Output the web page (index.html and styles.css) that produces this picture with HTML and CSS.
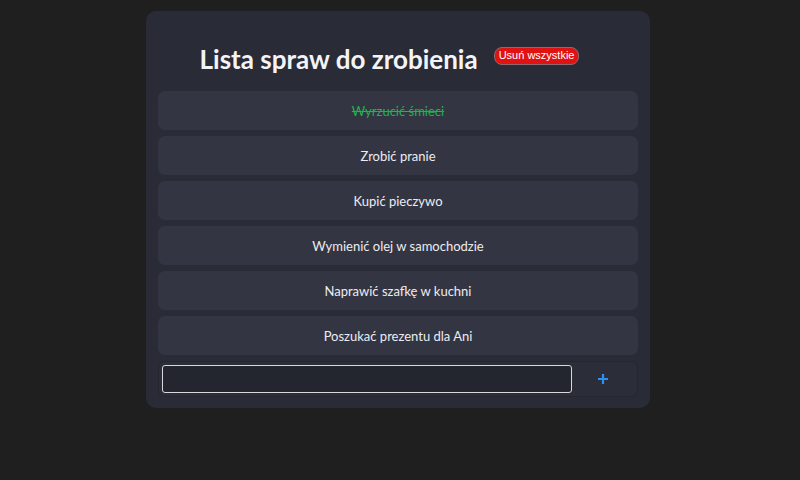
FILE: index.html
```html
<!DOCTYPE html>
<html lang="pl">
<head>
<meta charset="utf-8">
<link rel="stylesheet" href="styles.css">
</head>
<body>
<div class="card">
  <div class="header">
    <h1 class="title">Lista spraw do zrobienia</h1>
    <button class="clear">Usuń wszystkie</button>
  </div>
  <ul class="list">
    <li class="item done">Wyrzucić śmieci</li>
    <li class="item">Zrobić pranie</li>
    <li class="item">Kupić pieczywo</li>
    <li class="item">Wymienić olej w samochodzie</li>
    <li class="item">Naprawić szafkę w kuchni</li>
    <li class="item">Poszukać prezentu dla Ani</li>
  </ul>
  <div class="add">
    <input class="field" type="text" autofocus>
    <button class="plus">
      <svg width="12" height="12" viewBox="0 0 12 12"><path d="M6 1v10M1 6h10" stroke="#2f8ef2" stroke-width="2.2" fill="none"/></svg>
    </button>
  </div>
</div>
</body>
</html>
```
FILE: styles.css
```css
html, body { margin: 0; padding: 0; }
body {
  background: #1f1f1f;
  font-family: Lato, "Noto Sans", sans-serif;
  color: #ececec;
  width: 800px;
  height: 480px;
  padding-top: 11px;
  box-sizing: border-box;
}
.card {
  width: 504px;
  margin: 0 auto 0 146px;
  background: #292b36;
  border-radius: 10px;
  padding: 0 12px 11px;
  box-sizing: border-box;
}
.header {
  display: flex;
  align-items: center;
  justify-content: center;
  gap: 16px;
  height: 80px;
  padding: 16px 17px 0 0;
  box-sizing: border-box;
}
.title {
  margin: 0;
  font-size: 26px;
  font-weight: 700;
  color: #f4f4f6;
  line-height: 32px;
}
.clear {
  background: #e01212;
  color: #fff;
  border: 1px solid #8a6a6e;
  border-radius: 8px;
  font-family: "Liberation Sans", Arial, sans-serif;
  font-size: 11px;
  padding: 1px 4px 2px;
  line-height: 13px;
  margin-top: -6px;
}
.list {
  list-style: none;
  margin: 0;
  padding: 0;
  display: flex;
  flex-direction: column;
  gap: 6px;
}
.item {
  height: 39px;
  background: #333542;
  border-radius: 7px;
  display: flex;
  align-items: center;
  justify-content: center;
  font-size: 13px;
  color: #ececf0;
}
.item.done {
  color: #22b14c;
  text-decoration: line-through;
}
.add {
  margin-top: 6px;
  height: 36px;
  background: #2b2d39;
  border: 1px solid #242631;
  border-radius: 7px;
  display: flex;
  align-items: center;
  padding: 0 3px;
  box-sizing: border-box;
}
.field {
  width: 410px;
  height: 28px;
  box-sizing: border-box;
  background: #23252f;
  border: 1px solid #d8d8dc;
  border-radius: 3px;
  outline: none;
  color: #fff;
  padding: 0 4px;
  font-family: inherit;
}
.plus {
  flex: 1;
  background: none;
  border: none;
  display: flex;
  align-items: center;
  justify-content: center;
  height: 28px;
  padding: 0;
}
```
